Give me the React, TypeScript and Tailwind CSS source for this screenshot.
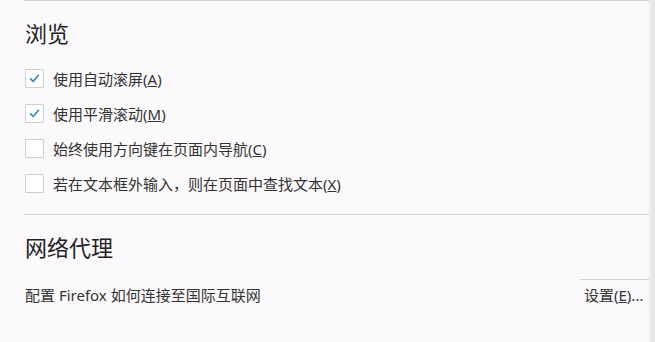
import React from "react";

const font = { fontFamily: '"Noto Sans", "Noto Sans CJK SC", sans-serif' };

function Check({ checked }: { checked: boolean }) {
  return (
    <div className="w-[19px] h-[19px] border border-[#cfcfd3] bg-white rounded-[1px] flex items-center justify-center shrink-0">
      {checked && (
        <svg width="13" height="13" viewBox="0 0 13 13">
          <path d="M2.5 6.8 L5.2 9.4 L10.5 3.3" fill="none" stroke="#3f8bb4" strokeWidth="1.7" strokeLinecap="round" strokeLinejoin="round" />
        </svg>
      )}
    </div>
  );
}

function Row({ checked, label, k }: { checked: boolean; label: string; k: string }) {
  return (
    <div className="h-[35px] flex items-center gap-[9px]">
      <Check checked={checked} />
      <span className="text-[15px] leading-[20px] text-[#333333]">
        {label}(<u>{k}</u>)
      </span>
    </div>
  );
}

export default function App() {
  return (
    <div className="w-[655px] h-[342px] bg-[#fcf9fc] flex overflow-hidden" style={font}>
      <div className="flex-1 pl-[24px]">
        <div className="border-t border-[#d2d2d4] pt-[17px]">
          <div className="pl-[1px] text-[22px] leading-[30px] text-[#222222]">浏览</div>
          <div className="mt-[13px] pl-[1px]">
            <Row checked label="使用自动滚屏" k="A" />
            <Row checked label="使用平滑滚动" k="M" />
            <Row checked={false} label="始终使用方向键在页面内导航" k="C" />
            <Row checked={false} label="若在文本框外输入，则在页面中查找文本" k="X" />
          </div>
          <div className="mt-[13px] border-t border-[#d6d6d8] pt-[17px]">
            <div className="pl-[1px] text-[22px] leading-[30px] text-[#222222]">网络代理</div>
            <div className="mt-[17px] flex items-center justify-between pl-[1px]">
              <span className="text-[15px] leading-[20px] text-[#333333]">配置 Firefox 如何连接至国际互联网</span>
              <div className="w-[69px] h-[32px] border-t border-[#d4d4d6] bg-[#fbf8fb] flex items-center pl-[4px] text-[15px] text-[#333333] whitespace-nowrap">
                设置(<u>E</u>)...
              </div>
            </div>
          </div>
        </div>
      </div>
      <div className="w-[6px] h-full bg-gradient-to-r from-[#eeedef] to-[#e4e3e5]" />
    </div>
  );
}
